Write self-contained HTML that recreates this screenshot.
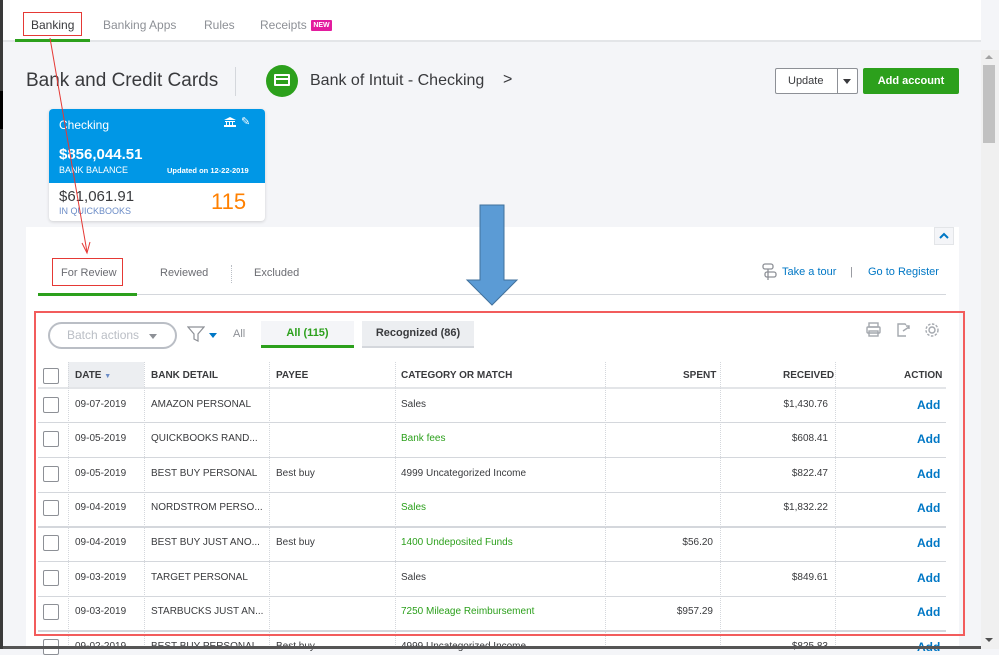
<!DOCTYPE html><html><head><meta charset="utf-8"><style>
*{box-sizing:border-box;margin:0;padding:0}
body{width:999px;height:649px;overflow:hidden;position:relative;background:#f4f5f8;font-family:"Liberation Sans",sans-serif;color:#393a3d}
.a{position:absolute;white-space:nowrap}
.hd{font-size:10px;font-weight:bold;color:#393a3d}
.c{font-size:10px;color:#393a3d}
.g{color:#2ca01c}
.add{font-size:12px;font-weight:bold;color:#0077c5}
.cb{position:absolute;left:43px;width:16px;height:16px;border:1px solid #8d9096;border-radius:2px;background:#fff}
</style></head><body>
<div class="a" style="left:0;top:0;width:3px;height:649px;background:#3a3a3a"></div>
<div class="a" style="left:0;top:91px;width:3px;height:38px;background:#000"></div>
<!-- top nav -->
<div class="a" style="left:3px;top:0;width:978px;height:42px;background:#fff;border-bottom:2px solid #e3e5e8"></div>
<div class="a" style="left:31px;top:18px;font-size:12px;color:#393a3d">Banking</div>
<div class="a" style="left:15px;top:39px;width:75px;height:3px;background:#2ca01c"></div>
<div class="a" style="left:103px;top:18px;font-size:12px;color:#8d9096">Banking Apps</div>
<div class="a" style="left:204px;top:18px;font-size:12px;color:#8d9096">Rules</div>
<div class="a" style="left:260px;top:18px;font-size:12px;color:#8d9096">Receipts</div>
<div class="a" style="left:311px;top:20px;width:21px;height:11px;background:#e31c9e;color:#fff;font-size:7px;font-weight:bold;text-align:center;line-height:11px;border-radius:1px">NEW</div>
<!-- header -->
<div class="a" style="left:26px;top:70px;font-size:19px;color:#393a3d">Bank and Credit Cards</div>
<div class="a" style="left:235px;top:67px;width:1px;height:29px;background:#d4d7dc"></div>
<div class="a" style="left:266px;top:65px;width:32px;height:32px;border-radius:50%;background:#2ca01c"></div>
<div class="a" style="left:274px;top:74px;width:16px;height:12px;border:2px solid #fff;border-radius:1px"></div>
<div class="a" style="left:276px;top:78px;width:12px;height:2px;background:#fff"></div>
<div class="a" style="left:310px;top:72px;font-size:16px;color:#393a3d">Bank of Intuit - Checking</div>
<div class="a" style="left:503px;top:71px;font-size:16px;color:#393a3d">&gt;</div>
<div class="a" style="left:775px;top:68px;width:83px;height:26px;border:1px solid #8d9096;border-radius:2px;background:#fff"></div>
<div class="a" style="left:837px;top:68px;width:1px;height:26px;background:#8d9096"></div>
<div class="a" style="left:788px;top:75px;font-size:11px;color:#393a3d">Update</div>
<div class="a" style="left:843px;top:79px;border-left:4px solid transparent;border-right:4px solid transparent;border-top:5px solid #393a3d"></div>
<div class="a" style="left:863px;top:68px;width:96px;height:26px;background:#2ca01c;border-radius:2px;color:#fff;font-size:11px;font-weight:bold;text-align:center;line-height:26px">Add account</div>
<!-- card -->
<div class="a" style="left:49px;top:109px;width:216px;height:112px;background:#fff;border-radius:4px;box-shadow:0 1px 3px rgba(0,0,0,.15);overflow:hidden">
<div style="position:absolute;left:0;top:0;width:216px;height:74px;background:#0097e6"></div>
<div class="a" style="left:10px;top:9px;font-size:12px;color:#fff">Checking</div>
<svg class="a" style="left:175px;top:8px" width="12" height="10" viewBox="0 0 12 10"><path d="M0 3L6 0L12 3Z M1 4H11V5H1Z M2 5H3V8H2Z M5 5H6V8H5Z M8 5H9V8H8Z M0 8H12V10H0Z" fill="#fff"/></svg>
<div class="a" style="left:192px;top:6px;font-size:11px;color:#fff">&#9998;</div>
<div class="a" style="left:10px;top:37px;font-size:15px;font-weight:bold;color:#fff">$856,044.51</div>
<div class="a" style="left:10px;top:56px;font-size:9px;color:#fff">BANK BALANCE</div>
<div class="a" style="left:118px;top:57px;font-size:7.5px;color:#fff;font-weight:bold">Updated on 12-22-2019</div>
<div class="a" style="left:10px;top:79px;font-size:15px;color:#393a3d">$61,061.91</div>
<div class="a" style="left:10px;top:97px;font-size:9px;color:#6b8cc7">IN QUICKBOOKS</div>
<div class="a" style="left:162px;top:80px;font-size:22px;color:#ff8000">115</div>
</div>
<!-- scrollbar -->
<div class="a" style="left:981px;top:50px;width:18px;height:599px;background:#f0f0f0"></div>
<div class="a" style="left:983px;top:65px;width:12px;height:78px;background:#c1c1c1"></div>
<div class="a" style="left:985px;top:55px;border-left:4px solid transparent;border-right:4px solid transparent;border-bottom:4px solid #a3a3a3"></div>
<div class="a" style="left:985px;top:638px;border-left:4px solid transparent;border-right:4px solid transparent;border-top:4px solid #505050"></div>
<!-- panel -->
<div class="a" style="left:26px;top:227px;width:933px;height:422px;background:#fff"></div>
<div class="a" style="left:934px;top:227px;width:20px;height:18px;background:#f4f5f8;border:1px solid #e3e5e8"></div>
<svg class="a" style="left:939px;top:232px" width="10" height="8" viewBox="0 0 10 8"><path d="M1 6L5 2L9 6" fill="none" stroke="#0077c5" stroke-width="2"/></svg>
<div class="a" style="left:61px;top:267px;font-size:11px;color:#6b6c72">For Review</div>
<div class="a" style="left:160px;top:267px;font-size:11px;color:#6b6c72">Reviewed</div>
<div class="a" style="left:231px;top:265px;width:0;height:18px;border-left:1px dotted #babec5"></div>
<div class="a" style="left:254px;top:267px;font-size:11px;color:#6b6c72">Excluded</div>
<div class="a" style="left:38px;top:294px;width:908px;height:1px;background:#d4d7dc"></div>
<div class="a" style="left:38px;top:293px;width:99px;height:3px;background:#2ca01c"></div>
<svg class="a" style="left:761px;top:263px" width="16" height="18" viewBox="0 0 16 18"><rect x="2" y="1" width="10" height="5" rx="2" fill="none" stroke="#8d9096" stroke-width="1.3"/><rect x="4" y="9" width="11" height="5" rx="2" fill="none" stroke="#8d9096" stroke-width="1.3"/><line x1="7" y1="6" x2="7" y2="17" stroke="#8d9096" stroke-width="1.3"/></svg>
<div class="a" style="left:782px;top:266px;font-size:11px;color:#0077c5">Take a tour</div>
<div class="a" style="left:850px;top:266px;font-size:11px;color:#8d9096">|</div>
<div class="a" style="left:868px;top:266px;font-size:11px;color:#0077c5">Go to Register</div>
<!-- toolbar -->
<div class="a" style="left:48px;top:322px;width:129px;height:27px;border:2px solid #babec5;border-radius:14px"></div>
<div class="a" style="left:67px;top:328px;font-size:12px;color:#babec5">Batch actions</div>
<div class="a" style="left:149px;top:334px;border-left:4px solid transparent;border-right:4px solid transparent;border-top:5px solid #8d9096"></div>
<svg class="a" style="left:187px;top:325px" width="18" height="18" viewBox="0 0 18 18"><path d="M1 2H17L11 9V16L7 14V9Z" fill="none" stroke="#8d9096" stroke-width="1.2"/></svg>
<div class="a" style="left:209px;top:333px;border-left:4px solid transparent;border-right:4px solid transparent;border-top:5px solid #0077c5"></div>
<div class="a" style="left:233px;top:328px;font-size:11px;color:#8d9096">All</div>
<div class="a" style="left:261px;top:321px;width:93px;height:27px;background:#f4f5f8;border-bottom:3px solid #2ca01c;text-align:center;line-height:25px;font-size:11px;color:#2ca01c;font-weight:bold">All (115)</div>
<div class="a" style="left:362px;top:321px;width:112px;height:27px;background:#eceef1;border-bottom:2px solid #d4d7dc;text-align:center;line-height:25px;font-size:11px;color:#393a3d;font-weight:bold">Recognized (86)</div>
<svg class="a" style="left:865px;top:321px" width="80" height="18" viewBox="0 0 80 18"><g fill="none" stroke="#a4a8ae" stroke-width="1.4"><rect x="4" y="2" width="9" height="4"/><rect x="2" y="6" width="13" height="6" rx="1"/><rect x="4" y="10" width="9" height="5"/><path d="M41 15H33V3H40L41 4M38 10L44 6M41 5H44V8"/><circle cx="67" cy="9" r="3"/><circle cx="67" cy="9" r="6" stroke-dasharray="2.5 1.5"/></g></svg>
<!-- table -->
<div class="a" style="left:68px;top:362px;width:76px;height:25px;background:#eceef1"></div>
<div class="a" style="left:38px;top:387px;width:908px;height:2px;background:#e3e5e8"></div>
<div class="cb" style="top:368px"></div>
<div class="a hd" style="left:75px;top:370px">DATE <span style="color:#6b8cc7;font-size:7px">&#9660;</span></div>
<div class="a hd" style="left:151px;top:370px">BANK DETAIL</div>
<div class="a hd" style="left:276px;top:370px">PAYEE</div>
<div class="a hd" style="left:401px;top:370px">CATEGORY OR MATCH</div>
<div class="a hd" style="left:683px;top:370px">SPENT</div>
<div class="a hd" style="left:783px;top:370px">RECEIVED</div>
<div class="a hd" style="left:904px;top:370px">ACTION</div>
<div class="a" style="left:68px;top:362px;height:287px;border-left:1px dotted #d4d7dc"></div>
<div class="a" style="left:144px;top:362px;height:287px;border-left:1px dotted #d4d7dc"></div>
<div class="a" style="left:269px;top:362px;height:287px;border-left:1px dotted #d4d7dc"></div>
<div class="a" style="left:395px;top:362px;height:287px;border-left:1px dotted #d4d7dc"></div>
<div class="a" style="left:605px;top:362px;height:287px;border-left:1px dotted #d4d7dc"></div>
<div class="a" style="left:720px;top:362px;height:287px;border-left:1px dotted #d4d7dc"></div>
<div class="a" style="left:835px;top:362px;height:287px;border-left:1px dotted #d4d7dc"></div>

<div class="cb" style="top:397px"></div><div class="a c" style="left:75px;top:399px">09-07-2019</div><div class="a c" style="left:151px;top:399px">AMAZON PERSONAL</div><div class="a c" style="left:401px;top:399px">Sales</div><div class="a c" style="right:171px;top:399px">$1,430.76</div><div class="a add" style="left:917px;top:398px">Add</div>
<div class="a" style="left:38px;top:422px;width:908px;height:1px;background:#d4d7dc"></div>
<div class="cb" style="top:431px"></div><div class="a c" style="left:75px;top:433px">09-05-2019</div><div class="a c" style="left:151px;top:433px">QUICKBOOKS RAND...</div><div class="a c g" style="left:401px;top:433px">Bank fees</div><div class="a c" style="right:171px;top:433px">$608.41</div><div class="a add" style="left:917px;top:432px">Add</div>
<div class="a" style="left:38px;top:457px;width:908px;height:1px;background:#d4d7dc"></div>
<div class="cb" style="top:466px"></div><div class="a c" style="left:75px;top:468px">09-05-2019</div><div class="a c" style="left:151px;top:468px">BEST BUY PERSONAL</div><div class="a c" style="left:276px;top:468px">Best buy</div><div class="a c" style="left:401px;top:468px">4999 Uncategorized Income</div><div class="a c" style="right:171px;top:468px">$822.47</div><div class="a add" style="left:917px;top:467px">Add</div>
<div class="a" style="left:38px;top:492px;width:908px;height:1px;background:#d4d7dc"></div>
<div class="cb" style="top:500px"></div><div class="a c" style="left:75px;top:502px">09-04-2019</div><div class="a c" style="left:151px;top:502px">NORDSTROM PERSO...</div><div class="a c g" style="left:401px;top:502px">Sales</div><div class="a c" style="right:171px;top:502px">$1,832.22</div><div class="a add" style="left:917px;top:501px">Add</div>
<div class="a" style="left:38px;top:526px;width:908px;height:2px;background:#d4d7dc"></div>
<div class="cb" style="top:535px"></div><div class="a c" style="left:75px;top:537px">09-04-2019</div><div class="a c" style="left:151px;top:537px">BEST BUY JUST ANO...</div><div class="a c" style="left:276px;top:537px">Best buy</div><div class="a c g" style="left:401px;top:537px">1400 Undeposited Funds</div><div class="a c" style="right:286px;top:537px">$56.20</div><div class="a add" style="left:917px;top:536px">Add</div>
<div class="a" style="left:38px;top:561px;width:908px;height:1px;background:#d4d7dc"></div>
<div class="cb" style="top:570px"></div><div class="a c" style="left:75px;top:572px">09-03-2019</div><div class="a c" style="left:151px;top:572px">TARGET PERSONAL</div><div class="a c" style="left:401px;top:572px">Sales</div><div class="a c" style="right:171px;top:572px">$849.61</div><div class="a add" style="left:917px;top:571px">Add</div>
<div class="a" style="left:38px;top:596px;width:908px;height:1px;background:#d4d7dc"></div>
<div class="cb" style="top:604px"></div><div class="a c" style="left:75px;top:606px">09-03-2019</div><div class="a c" style="left:151px;top:606px">STARBUCKS JUST AN...</div><div class="a c g" style="left:401px;top:606px">7250 Mileage Reimbursement</div><div class="a c" style="right:286px;top:606px">$957.29</div><div class="a add" style="left:917px;top:605px">Add</div>
<div class="a" style="left:38px;top:630px;width:908px;height:2px;background:#d4d7dc"></div>
<div class="cb" style="top:639px"></div><div class="a c" style="left:75px;top:641px">09-02-2019</div><div class="a c" style="left:151px;top:641px">BEST BUY PERSONAL</div><div class="a c" style="left:276px;top:641px">Best buy</div><div class="a c" style="left:401px;top:641px">4999 Uncategorized Income</div><div class="a c" style="right:171px;top:641px">$825.83</div><div class="a add" style="left:917px;top:640px">Add</div>
<div class="a" style="left:3px;top:646px;width:978px;height:3px;background:#555"></div>
<!-- annotations -->
<div class="a" style="left:23px;top:12px;width:59px;height:24px;border:1px solid #e53935"></div>
<div class="a" style="left:52px;top:258px;width:71px;height:28px;border:1px solid #e53935"></div>
<div class="a" style="left:34px;top:311px;width:931px;height:325px;border:2px solid #f25c5c"></div>
<svg class="a" style="left:0;top:0" width="999" height="649"><line x1="50" y1="38" x2="87" y2="252" stroke="#e53935" stroke-width="1"/><path d="M82 243L87 253L90 242" fill="none" stroke="#e53935" stroke-width="1"/><path d="M480 205H504V280H517L492 305L467 280H480Z" fill="#5b9bd5" stroke="#41719c" stroke-width="1"/></svg>
</body></html>
